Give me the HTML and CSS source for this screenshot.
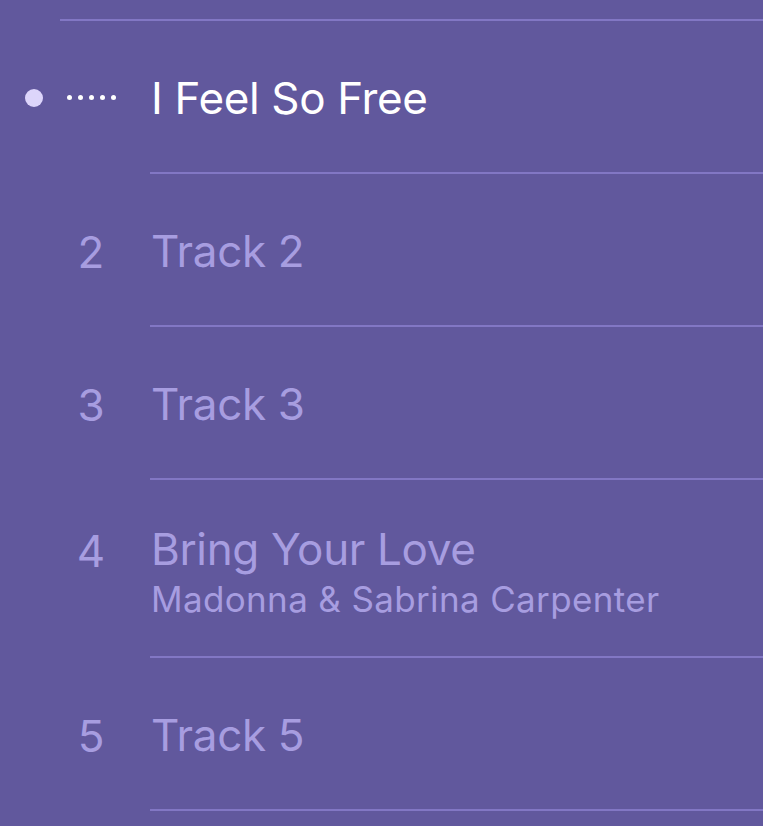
FILE: index.html
```html
<!DOCTYPE html>
<html lang="en">
<head>
    <meta charset="UTF-8">
    <meta name="viewport" content="width=device-width, initial-scale=1.0">
    <title>Queue</title>
    <link rel="stylesheet" href="styles.css">
</head>
<body>
    <div class="tracklist">
        <div class="top-rule"></div>

        <div class="track playing">
            <div class="lead">
                <span class="now-dot"></span>
                <span class="wave">
                    <i></i><i></i><i></i><i></i><i></i>
                </span>
            </div>
            <div class="main">
                <div class="title">I Feel So Free</div>
            </div>
        </div>

        <div class="track">
            <div class="lead"><span class="num">2</span></div>
            <div class="main">
                <div class="title">Track 2</div>
            </div>
        </div>

        <div class="track">
            <div class="lead"><span class="num">3</span></div>
            <div class="main">
                <div class="title">Track 3</div>
            </div>
        </div>

        <div class="track tall">
            <div class="lead"><span class="num">4</span></div>
            <div class="main">
                <div class="title">Bring Your Love</div>
                <div class="artist">Madonna &amp; Sabrina Carpenter</div>
            </div>
        </div>

        <div class="track">
            <div class="lead"><span class="num">5</span></div>
            <div class="main">
                <div class="title">Track 5</div>
            </div>
        </div>
    </div>
</body>
</html>
```

FILE: styles.css
```css
:root {
    --bg: #61589d;
    --rule: #8277c4;
    --dim: #a79de0;
    --dot: #ddd5fb;
    --text: #ffffff;
}

* {
    box-sizing: border-box;
    margin: 0;
    padding: 0;
}

html, body {
    height: 100%;
}

body {
    background: var(--bg);
    font-family: 'Inter', 'Noto Sans', sans-serif;
    color: var(--dim);
    overflow: hidden;
}

.tracklist {
    padding-top: 19px;
}

.top-rule {
    margin-left: 60px;
    height: 2px;
    background: var(--rule);
}

.track {
    display: flex;
}

.lead {
    width: 150px;
    flex-shrink: 0;
    display: flex;
    align-items: center;
    padding-left: 60px;
}

.main {
    flex: 1;
    height: 153px;
    border-bottom: 2px solid var(--rule);
    display: flex;
    flex-direction: column;
    justify-content: center;
    padding-left: 1px;
    padding-top: 2px;
}

.num {
    width: 62px;
    text-align: center;
    font-size: 44px;
    line-height: 50px;
    padding-top: 2px;
}

.title {
    font-size: 44px;
    line-height: 50px;
    letter-spacing: -0.35px;
}

.artist {
    font-size: 35px;
    line-height: 42px;
    margin-top: 4px;
    letter-spacing: 0.35px;
}

/* two-line row: number sits beside the title */
.track.tall .main {
    height: 178px;
    padding-top: 8px;
}

.track.tall .lead {
    align-items: flex-start;
    padding-top: 44px;
}

/* now playing */
.playing .lead {
    padding-left: 25px;
}

.playing .title {
    color: var(--text);
}

.now-dot {
    width: 18px;
    height: 18px;
    border-radius: 50%;
    background: var(--dot);
}

.wave {
    display: flex;
    gap: 6px;
    margin-left: 24px;
}

.wave i {
    width: 5px;
    height: 5px;
    border-radius: 50%;
    background: var(--text);
}
```
